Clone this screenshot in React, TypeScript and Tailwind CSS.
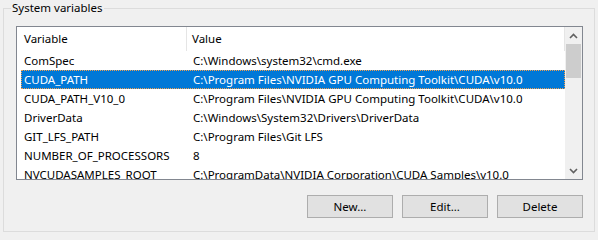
const rows = [
  ["ComSpec", "C:\\Windows\\system32\\cmd.exe"],
  ["CUDA_PATH", "C:\\Program Files\\NVIDIA GPU Computing Toolkit\\CUDA\\v10.0"],
  ["CUDA_PATH_V10_0", "C:\\Program Files\\NVIDIA GPU Computing Toolkit\\CUDA\\v10.0"],
  ["DriverData", "C:\\Windows\\System32\\Drivers\\DriverData"],
  ["GIT_LFS_PATH", "C:\\Program Files\\Git LFS"],
  ["NUMBER_OF_PROCESSORS", "8"],
  ["NVCUDASAMPLES_ROOT", "C:\\ProgramData\\NVIDIA Corporation\\CUDA Samples\\v10.0"],
];

const selected = 1;

function Chevron({ down }: { down?: boolean }) {
  return (
    <svg width="9" height="6" viewBox="0 0 9 6" className={down ? "rotate-180" : ""}>
      <path d="M1 5 L4.5 1.5 L8 5" fill="none" stroke="#606060" strokeWidth="1.6" />
    </svg>
  );
}

function Btn({ label }: { label: string }) {
  return (
    <button className="w-[86px] h-[23px] bg-[#e1e1e1] border border-[#adadad] text-black text-[11.5px] leading-none">
      {label}
    </button>
  );
}

export default function App() {
  return (
    <div
      className="w-[598px] h-[240px] bg-[#f0f0f0] text-[11.5px] text-black overflow-hidden pl-[3px] pr-[3px]"
      style={{ fontFamily: '"Noto Sans", sans-serif' }}
    >
      <fieldset className="border border-[#dcdcdc] w-[592px] h-[232px] pl-[12px] pr-[11px] pt-[10px] m-0">
        <legend className="-ml-[5px] px-[1px] h-[16px] leading-[16px]">System variables</legend>

        {/* list view */}
        <div className="border border-[#828790] bg-white h-[154px] flex overflow-hidden">
          <div className="flex-1 min-w-0 overflow-hidden">
            {/* header */}
            <div className="flex h-[24px] items-center">
              <div className="w-[170px] h-full pl-[7px] flex items-center border-r border-[#e5e5e5]">Variable</div>
              <div className="flex-1 h-full pl-[5px] flex items-center border-r border-[#e5e5e5]">Value</div>
            </div>
            {rows.map(([name, value], i) => {
              const sel = i === selected;
              return (
                <div key={name} className="h-[19px] pl-[4px]">
                  <div
                    className={
                      sel
                        ? "flex h-full items-center bg-[#0078d7] text-white border border-dotted border-[#f0a050]"
                        : "flex h-full items-center border border-transparent"
                    }
                  >
                    <div className="w-[166px] pl-[2px] whitespace-nowrap">{name}</div>
                    <div className="flex-1 pl-[5px] whitespace-nowrap overflow-hidden">{value}</div>
                  </div>
                </div>
              );
            })}
          </div>

          {/* scrollbar */}
          <div className="w-[17px] bg-[#f0f0f0] flex flex-col items-center">
            <div className="h-[17px] flex items-center justify-center">
              <Chevron />
            </div>
            <div className="w-[15px] h-[34px] bg-[#cdcdcd]" />
            <div className="flex-1" />
            <div className="h-[17px] flex items-center justify-center">
              <Chevron down />
            </div>
          </div>
        </div>

        <div className="flex justify-end gap-[9px] mt-[15px]">
          <Btn label="New..." />
          <Btn label="Edit..." />
          <Btn label="Delete" />
        </div>
      </fieldset>
    </div>
  );
}
